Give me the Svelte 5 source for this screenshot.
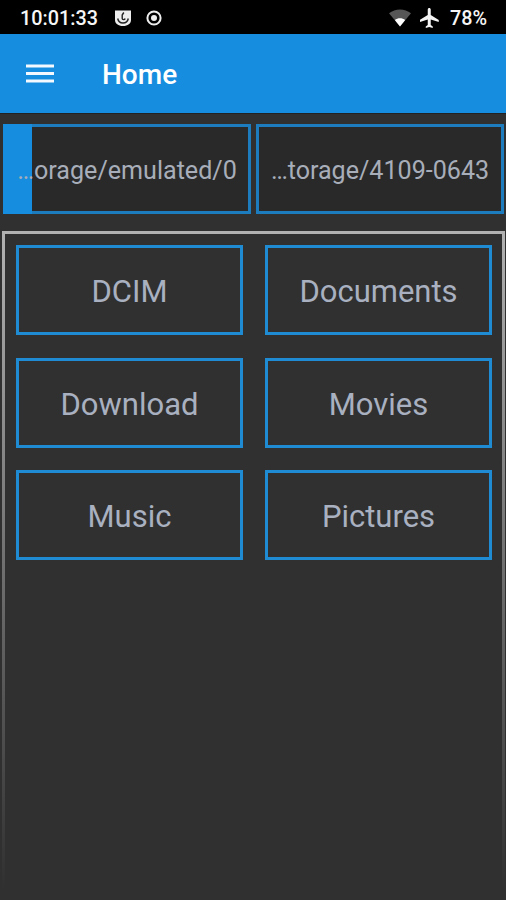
<script lang="ts">
	const storages = [
		{ label: '…orage/emulated/0', used: 12 },
		{ label: '…torage/4109-0643', used: 0 }
	];

	const folders = ['DCIM', 'Documents', 'Download', 'Movies', 'Music', 'Pictures'];
</script>

<div class="screen">
	<div class="status">
		<span class="time">10:01:33</span>
		<svg class="badge" width="18" height="17" viewBox="0 0 18 17">
			<path d="M1 .5h16v9.5c0 3.5-3.2 6-8 6s-8-2.500-8-6z" fill="#eee" />
			<path d="M3.700 8.500c.6 3 2.600 4.500 5.300 4.500s4.700-1.500 5.300-4.500" fill="none" stroke="#222" stroke-width="1.400" />
			<path d="M9.800 2.500 8.200 5v3.500c0 1.500 2.600 1.500 2.900 0" fill="none" stroke="#222" stroke-width="1.400" />
		</svg>
		<svg class="record" width="16" height="16" viewBox="0 0 16 16">
			<circle cx="8" cy="8" r="6.600" fill="none" stroke="#eee" stroke-width="2" />
			<circle cx="8" cy="8" r="3" fill="#eee" />
		</svg>
		<span class="spacer"></span>
		<svg class="wifi" width="22" height="18" viewBox="0 0 22 18">
			<path d="M0 4.200C6.300-.9 15.700-.9 22 4.200L11 17.500z" fill="#565656" />
			<path d="M5.800 11C8.800 8.500 13.200 8.500 16.200 11L11 17.500z" fill="#fff" />
		</svg>
		<svg class="plane" width="19" height="20" viewBox="2.500 2 18.500 20">
			<path d="M21 16v-2l-8-5V3.500c0-.83-.67-1.500-1.500-1.500S10 2.670 10 3.500V9l-8 5v2l8-2.500V19l-2 1.500V22l3.500-1 3.500 1v-1.500L13 19v-5.500l8 2.500z" fill="#f4f4f4" />
		</svg>
		<span class="battery">78%</span>
	</div>

	<header>
		<button class="menu" aria-label="Open menu">
			<svg width="28" height="20" viewBox="0 0 28 20">
				<path d="M0 2h28M0 9.500h28M0 17h28" stroke="#f3f9ff" stroke-width="3" />
			</svg>
		</button>
		<h1>Home</h1>
	</header>

	<div class="storages">
		{#each storages as storage}
			<button class="storage">
				{#if storage.used}
					<span class="used" style="width: {storage.used}%"></span>
				{/if}
				<span class="label">{storage.label}</span>
			</button>
		{/each}
	</div>

	<main>
		{#each folders as folder}
			<button class="folder">{folder}</button>
		{/each}
	</main>
</div>

<style>
	:global(body) {
		margin: 0;
		background: #303030;
	}

	.screen {
		display: flex;
		flex-direction: column;
		width: 506px;
		height: 900px;
		overflow: hidden;
		background: #303030;
		font-family: Roboto, sans-serif;
	}

	button {
		margin: 0;
		padding: 0;
		border: none;
		border-radius: 0;
		background: none;
		font-family: inherit;
		cursor: pointer;
	}

	svg {
		display: block;
		flex: none;
	}

	.status {
		display: flex;
		align-items: center;
		box-sizing: border-box;
		height: 34px;
		padding: 2px 19px 0 20px;
		background: #000;
		color: #f6f6f6;
		font-size: 19.800px;
		font-weight: 500;
		line-height: 32px;
	}

	.time {
		width: 94px;
		padding-top: 1px;
	}

	.battery {
		padding-top: 1px;
	}

	.record {
		margin-left: 14px;
	}

	.spacer {
		flex: 1;
	}

	.plane {
		margin: 0 11px 0 9px;
	}

	header {
		display: flex;
		align-items: center;
		box-sizing: border-box;
		height: 79px;
		padding: 2px 0 0 26px;
		background: #168dde;
		color: #fff;
	}

	.menu {
		padding-bottom: 2px;
	}

	h1 {
		margin: 0 0 0 48px;
		font-size: 28px;
		font-weight: 500;
		line-height: 32px;
	}

	.storages {
		display: flex;
		gap: 5px;
		padding: 10px 2px 0 3px;
		border-top: 1px solid #222;
	}

	.storage {
		position: relative;
		flex: 1;
		box-sizing: border-box;
		height: 90px;
		padding-top: 3px;
		border: 3px solid #1c7cbe;
		background: #292929;
		color: #a8aeb9;
		font-size: 25.100px;
	}

	/* fill level, drawn over the border and under the label */
	.used {
		position: absolute;
		inset: -3px auto -3px -3px;
		background: #168dde;
	}

	.label {
		position: relative;
	}

	main {
		display: grid;
		flex: 1;
		grid-template-columns: 227px 227px;
		grid-auto-rows: 90px;
		gap: 22.500px 22px;
		box-sizing: border-box;
		margin: 17px 1px 0 2px;
		padding: 11px;
		border: 3px solid;
		border-bottom: none;
		border-image: linear-gradient(#b2b2b2, #303030 98%) 3;
	}

	.folder {
		padding-top: 3px;
		border: 3px solid #1f8bd2;
		color: #a9b1c0;
		font-size: 31px;
	}
</style>
